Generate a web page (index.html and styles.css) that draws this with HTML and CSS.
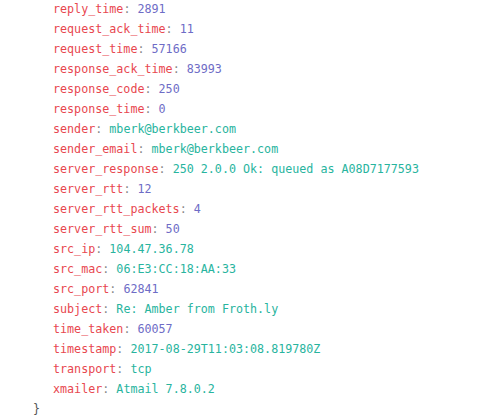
FILE: index.html
```html
<!DOCTYPE html>
<html>
<head>
<meta charset="utf-8">
<link rel="stylesheet" href="styles.css">
</head>
<body>
<div class="json">
  <div class="props">
    <div class="row"><span class="k">reply_time</span><span class="c">: </span><span class="n">2891</span></div>
    <div class="row"><span class="k">request_ack_time</span><span class="c">: </span><span class="n">11</span></div>
    <div class="row"><span class="k">request_time</span><span class="c">: </span><span class="n">57166</span></div>
    <div class="row"><span class="k">response_ack_time</span><span class="c">: </span><span class="n">83993</span></div>
    <div class="row"><span class="k">response_code</span><span class="c">: </span><span class="n">250</span></div>
    <div class="row"><span class="k">response_time</span><span class="c">: </span><span class="n">0</span></div>
    <div class="row"><span class="k">sender</span><span class="c">: </span><span class="s">mberk@berkbeer.com</span></div>
    <div class="row"><span class="k">sender_email</span><span class="c">: </span><span class="s">mberk@berkbeer.com</span></div>
    <div class="row"><span class="k">server_response</span><span class="c">: </span><span class="s">250 2.0.0 Ok: queued as A08D7177593</span></div>
    <div class="row"><span class="k">server_rtt</span><span class="c">: </span><span class="n">12</span></div>
    <div class="row"><span class="k">server_rtt_packets</span><span class="c">: </span><span class="n">4</span></div>
    <div class="row"><span class="k">server_rtt_sum</span><span class="c">: </span><span class="n">50</span></div>
    <div class="row"><span class="k">src_ip</span><span class="c">: </span><span class="s">104.47.36.78</span></div>
    <div class="row"><span class="k">src_mac</span><span class="c">: </span><span class="s">06:E3:CC:18:AA:33</span></div>
    <div class="row"><span class="k">src_port</span><span class="c">: </span><span class="n">62841</span></div>
    <div class="row"><span class="k">subject</span><span class="c">: </span><span class="s">Re: Amber from Froth.ly</span></div>
    <div class="row"><span class="k">time_taken</span><span class="c">: </span><span class="n">60057</span></div>
    <div class="row"><span class="k">timestamp</span><span class="c">: </span><span class="s">2017-08-29T11:03:08.819780Z</span></div>
    <div class="row"><span class="k">transport</span><span class="c">: </span><span class="s">tcp</span></div>
    <div class="row"><span class="k">xmailer</span><span class="c">: </span><span class="s">Atmail 7.8.0.2</span></div>
  </div>
  <div class="row brace">}</div>
</div>
</body>
</html>
```
FILE: styles.css
```css
html, body {
  margin: 0;
  padding: 0;
  background: #ffffff;
}
.json {
  margin-top: -1px;
  padding-left: 33px;
  font-family: "DejaVu Sans Mono", "Liberation Mono", monospace;
  font-size: 11.7px;
}
.props {
  padding-left: 20px;
}
.row {
  height: 20px;
  line-height: 20px;
  white-space: pre;
}
.k { color: #e8474f; }
.c { color: #888888; }
.n { color: #6e6cc6; }
.s { color: #28b49e; }
.brace { color: #555555; }
```
